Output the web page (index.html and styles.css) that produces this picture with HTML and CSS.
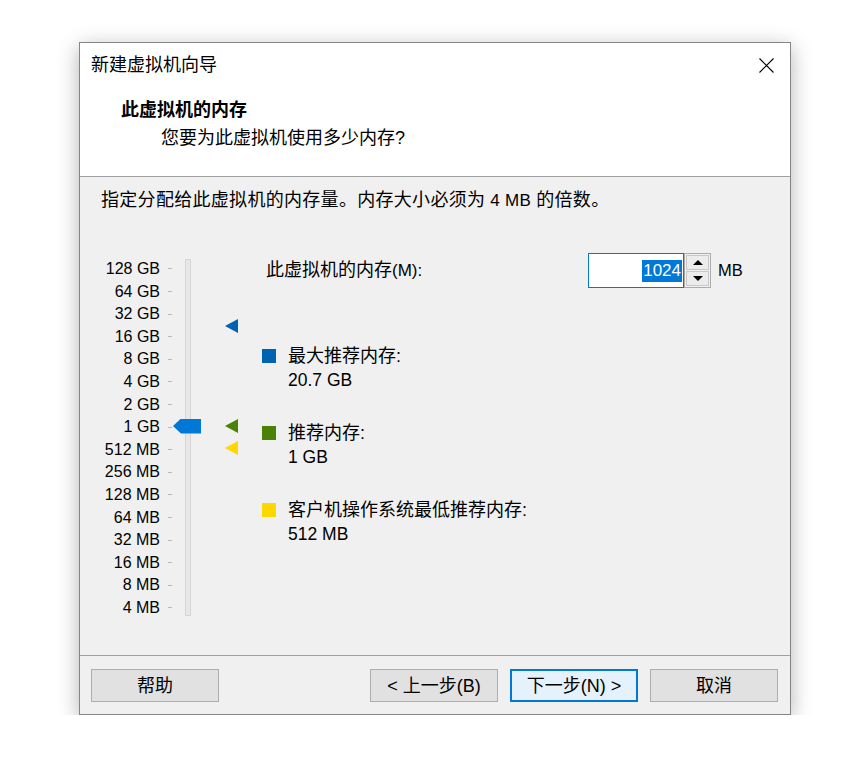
FILE: index.html
```html
<!DOCTYPE html>
<html lang="zh-CN">
<head>
<meta charset="utf-8">
<title>新建虚拟机向导</title>
<link rel="stylesheet" href="styles.css">
</head>
<body>
<div class="window">
  <div class="header">
    <div class="titlebar">
      <div class="title">新建虚拟机向导</div>
      <svg class="close" width="15" height="15" viewBox="0 0 15 15"><path d="M0.5 0.5 L14.5 14.5 M14.5 0.5 L0.5 14.5" stroke="#000" stroke-width="1.1" fill="none"/></svg>
    </div>
    <div class="heading">此虚拟机的内存</div>
    <div class="sub">您要为此虚拟机使用多少内存?</div>
  </div>
  <div class="body">
    <div class="desc">指定分配给此虚拟机的内存量。内存大小必须为<span class="l"> 4 MB </span>的倍数。</div>
    <div class="main">
      <div class="slider">
        <div class="scale">
          <div class="row"><span class="lbl">128 GB</span><span class="tick"></span></div>
          <div class="row"><span class="lbl">64 GB</span><span class="tick"></span></div>
          <div class="row"><span class="lbl">32 GB</span><span class="tick"></span></div>
          <div class="row"><span class="lbl">16 GB</span><span class="tick"></span></div>
          <div class="row"><span class="lbl">8 GB</span><span class="tick"></span></div>
          <div class="row"><span class="lbl">4 GB</span><span class="tick"></span></div>
          <div class="row"><span class="lbl">2 GB</span><span class="tick"></span></div>
          <div class="row"><span class="lbl">1 GB</span><span class="tick"></span></div>
          <div class="row"><span class="lbl">512 MB</span><span class="tick"></span></div>
          <div class="row"><span class="lbl">256 MB</span><span class="tick"></span></div>
          <div class="row"><span class="lbl">128 MB</span><span class="tick"></span></div>
          <div class="row"><span class="lbl">64 MB</span><span class="tick"></span></div>
          <div class="row"><span class="lbl">32 MB</span><span class="tick"></span></div>
          <div class="row"><span class="lbl">16 MB</span><span class="tick"></span></div>
          <div class="row"><span class="lbl">8 MB</span><span class="tick"></span></div>
          <div class="row"><span class="lbl">4 MB</span><span class="tick"></span></div>
        </div>
        <div class="track"><div class="thumb"></div></div>
        <div class="markers">
          <div class="marker blue" style="top:66px"></div>
          <div class="marker green" style="top:166px"></div>
          <div class="marker yellow" style="top:188px"></div>
        </div>
      </div>
      <div class="info">
        <div class="mem-row">
          <div class="mem-label">此虚拟机的内存<span class="l">(M):</span></div>
          <div class="spin">
            <div class="field"><span class="sel">1024</span></div>
            <div class="spinbtns">
              <div class="sb"><span class="up"></span></div>
              <div class="sb"><span class="down"></span></div>
            </div>
          </div>
          <div class="unit">MB</div>
        </div>
        <div class="legend">
          <div class="item">
            <span class="sq blue"></span>
            <span class="ilabel">最大推荐内存:</span>
            <span class="ival">20.7 GB</span>
          </div>
          <div class="item">
            <span class="sq green"></span>
            <span class="ilabel">推荐内存:</span>
            <span class="ival">1 GB</span>
          </div>
          <div class="item">
            <span class="sq yellow"></span>
            <span class="ilabel">客户机操作系统最低推荐内存:</span>
            <span class="ival">512 MB</span>
          </div>
        </div>
      </div>
    </div>
  </div>
  <div class="footer">
    <button class="btn help">帮助</button>
    <button class="btn">&lt; 上一步(B)</button>
    <button class="btn default">下一步(N) &gt;</button>
    <button class="btn">取消</button>
  </div>
</div>
</body>
</html>
```

FILE: styles.css
```css
* { box-sizing: border-box; }
body {
  margin: 0;
  background: #fff;
  font-family: "Liberation Sans", "Noto Sans CJK SC", sans-serif;
  color: #000;
}
.l { font-size: 16px; }
.window {
  margin: 42px 0 0 79px;
  width: 712px;
  height: 673px;
  border: 1px solid #858585;
  background: #f0f0f0;
  box-shadow: 0 5px 20px rgba(0, 0, 0, 0.3);
  display: flex;
  flex-direction: column;
}
.header {
  height: 134px;
  flex: none;
  background: #fff;
  border-bottom: 1px solid #a0a0a0;
  padding: 11px 16px 0 11px;
}
.titlebar {
  display: flex;
  justify-content: space-between;
  align-items: center;
  height: 22px;
}
.title { font-size: 18px; line-height: 22px; }
.heading {
  margin: 23px 0 0 30px;
  font-size: 18px;
  line-height: 22px;
  font-weight: bold;
}
.sub {
  margin: 6px 0 0 70px;
  font-size: 18px;
  line-height: 22px;
}
.body { flex: 1; padding-top: 12px; }
.desc {
  margin-left: 21px;
  font-size: 18px;
  line-height: 22px;
  letter-spacing: 0.3px;
}
.desc .l { font-size: 17px; }
.main { display: flex; margin-top: 41px; }
.slider { display: flex; width: 182px; flex: none; }
.scale { width: 92px; padding-top: 4.7px; }
.row {
  display: flex;
  align-items: center;
  height: 22.6px;
  font-size: 16px;
}
.lbl { width: 80px; text-align: right; }
.tick { width: 4px; height: 1px; background: #b8b8b8; margin-left: 8px; }
.track {
  position: relative;
  margin: 6px 0 0 13px;
  width: 6px;
  height: 357px;
  background: #e7e7e7;
  border: 1px solid #d6d6d6;
}
.thumb {
  position: absolute;
  left: -13px;
  top: 158.5px;
  width: 28px;
  height: 15px;
  background: #0078d7;
  clip-path: polygon(0 50%, 8px 0, 100% 0, 100% 100%, 8px 100%);
}
.markers { position: relative; width: 71px; }
.marker {
  position: absolute;
  left: 34px;
  width: 13px;
  height: 14px;
  clip-path: polygon(0 50%, 100% 0, 100% 100%);
}
.blue { background: #0063b1; }
.green { background: #498205; }
.yellow { background: #ffd700; }
.info { flex: 1; }
.mem-row {
  display: flex;
  align-items: center;
  height: 35px;
  padding-left: 4px;
}
.mem-label { width: 322px; font-size: 18px; line-height: 22px; }
.mem-label .l { font-size: 17px; }
.spin { display: flex; height: 35px; }
.field {
  width: 96px;
  height: 35px;
  border: 1px solid #0078d7;
  background: #fff;
  display: flex;
  align-items: center;
  justify-content: flex-end;
  padding-right: 1px;
}
.sel {
  background: #0078d7;
  color: #fff;
  font-size: 17px;
  line-height: 22px;
  padding: 0 1px;
}
.spinbtns {
  width: 27px;
  height: 35px;
  border: 1px solid #acacac;
  padding: 1px;
  display: flex;
  flex-direction: column;
  gap: 1px;
}
.sb {
  flex: 1;
  background: #ececec;
  border: 1px solid #c8c8c8;
  display: flex;
  align-items: center;
  justify-content: center;
}
.up, .down { width: 0; height: 0; border-left: 5px solid transparent; border-right: 5px solid transparent; }
.up { border-bottom: 5px solid #000; }
.down { border-top: 5px solid #000; }
.unit { margin-left: 7px; font-size: 16.5px; }
.legend {
  margin-top: 57px;
  display: flex;
  flex-direction: column;
  gap: 31px;
}
.item {
  display: grid;
  grid-template-columns: 14px auto;
  column-gap: 12px;
  row-gap: 2px;
  align-items: center;
  justify-content: start;
}
.sq { width: 14px; height: 14px; }
.ilabel { font-size: 18px; line-height: 22px; }
.ival { grid-column: 2; font-size: 17.5px; line-height: 22px; }
.footer {
  height: 59px;
  flex: none;
  border-top: 1px solid #a0a0a0;
  display: flex;
  gap: 12px;
  padding: 13px 12px 0 11px;
}
.btn {
  width: 128px;
  height: 33px;
  border: 1px solid #adadad;
  background: #e1e1e1;
  font-family: inherit;
  font-size: 18px;
  line-height: 22px;
  color: #000;
  padding: 0;
}
.btn.help { margin-right: auto; }
.btn.default { border: 2px solid #0078d7; background: #e5f1fb; }
```
